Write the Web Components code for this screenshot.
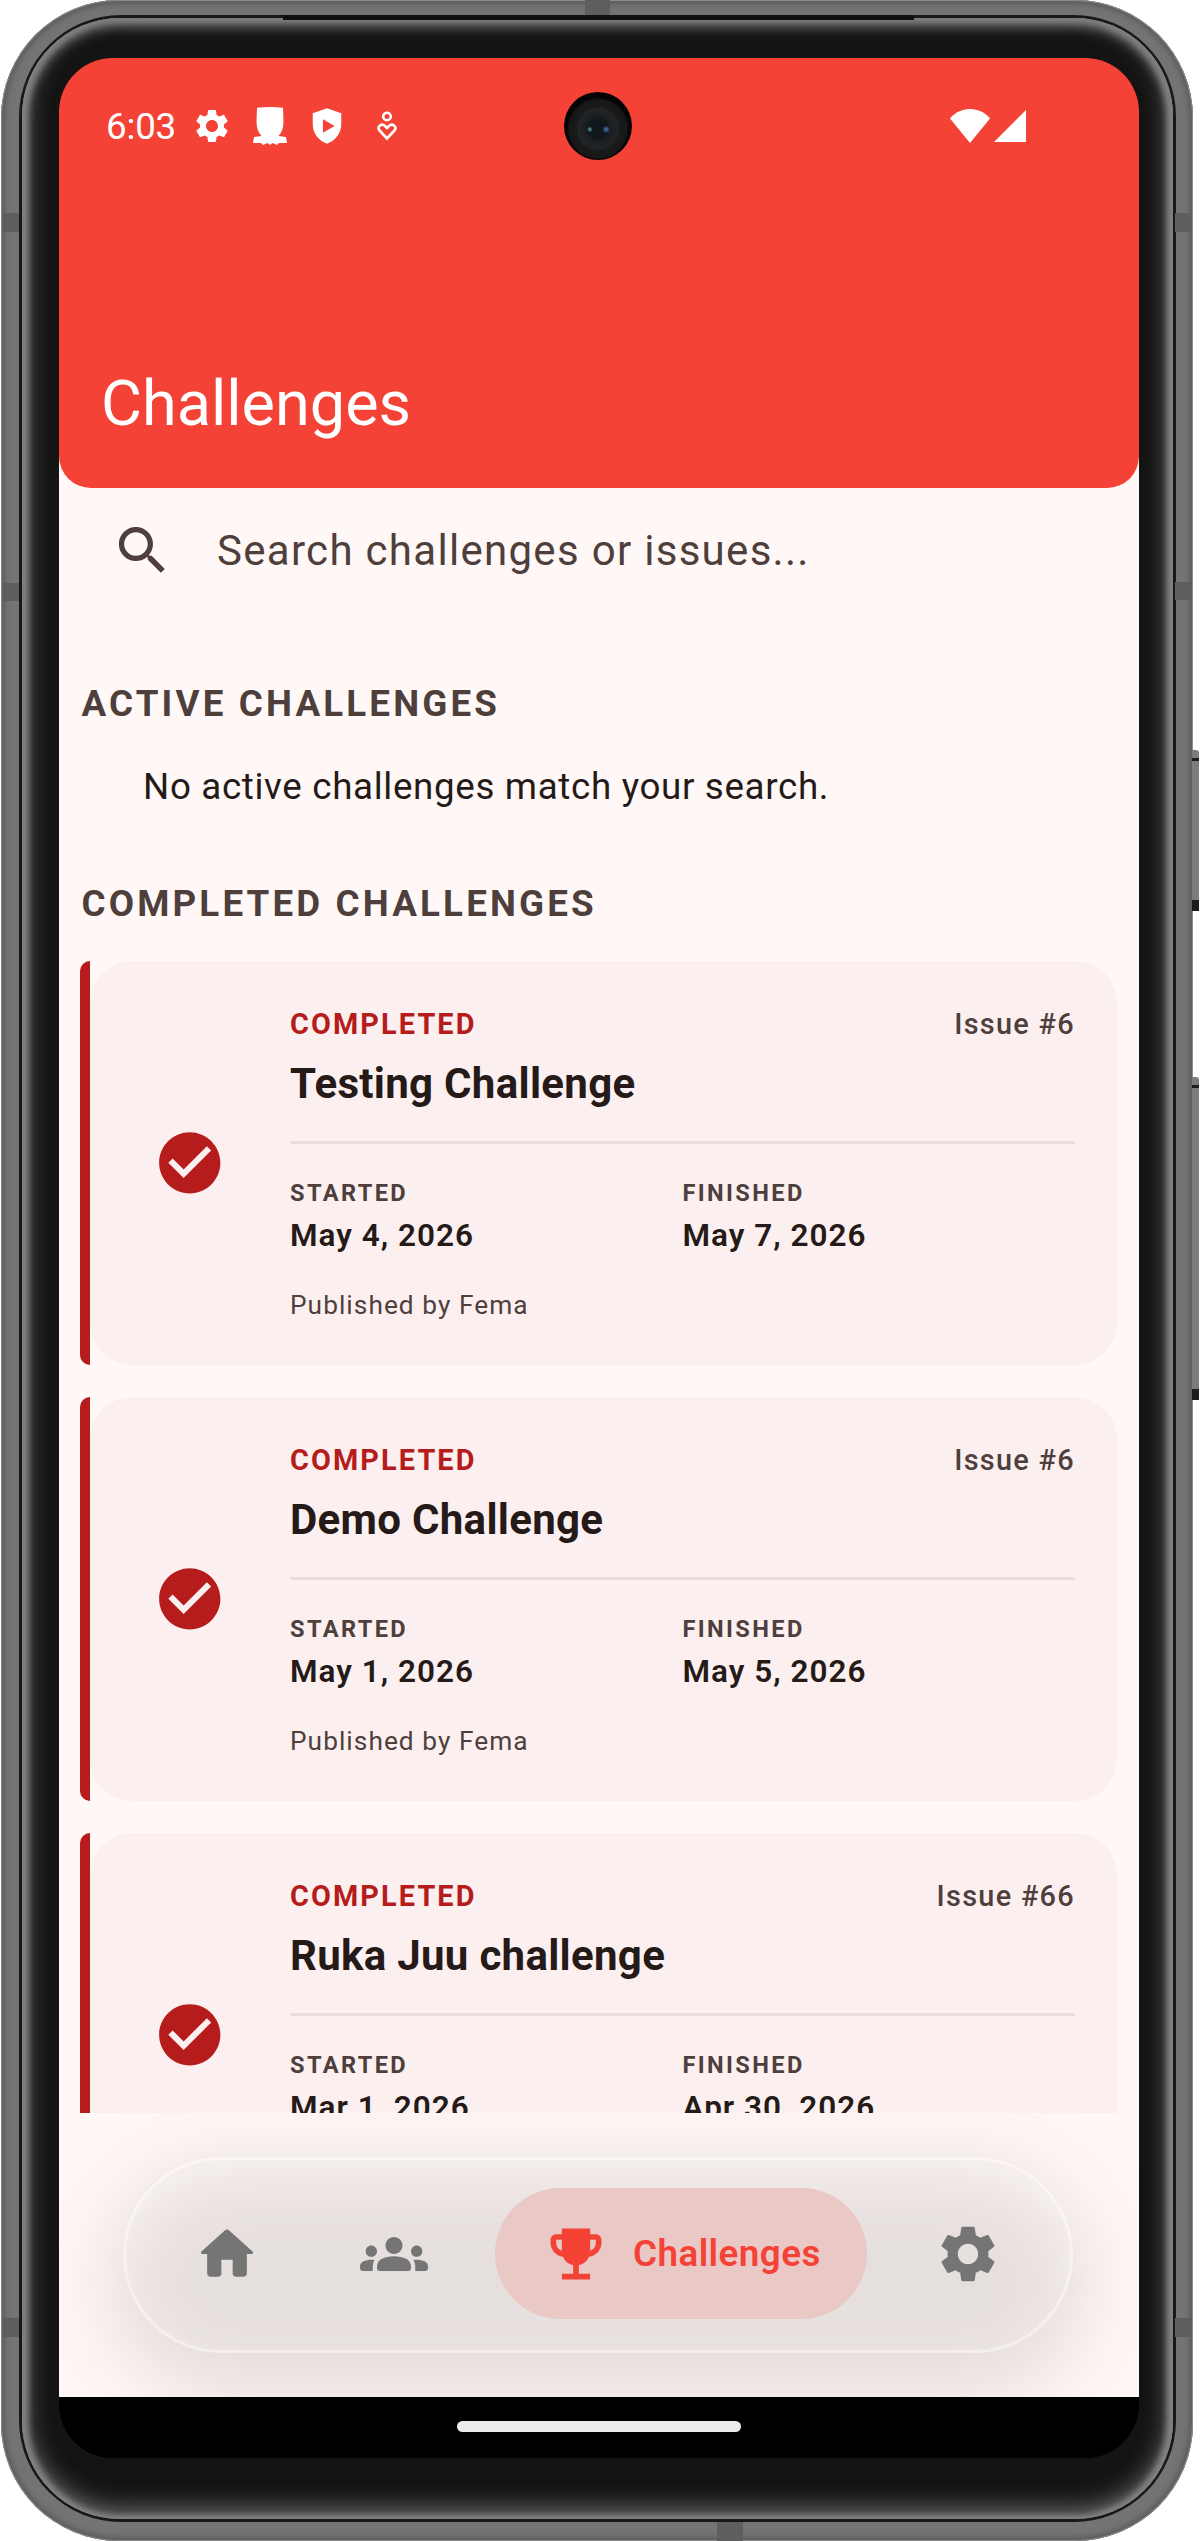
<!DOCTYPE html>
<html>
<head>
<meta charset="utf-8">
<title>Challenges</title>
<style>
  html, body { margin: 0; background: #fff; }
  body { font-family: Roboto, "Noto Sans", sans-serif; }
</style>
</head>
<body>
<device-frame>
  <status-bar slot="overlay"></status-bar>
  <app-header>Challenges</app-header>
  <challenge-list>
    <search-field placeholder="Search challenges or issues..."></search-field>
    <section-title style="margin-top:100px">ACTIVE CHALLENGES</section-title>
    <empty-note>No active challenges match your search.</empty-note>
    <section-title style="margin:71px 0 35px">COMPLETED CHALLENGES</section-title>
    <challenge-card name="Testing Challenge" issue="Issue #6" started="May 4, 2026" finished="May 7, 2026" publisher="Fema"></challenge-card>
    <challenge-card name="Demo Challenge" issue="Issue #6" started="May 1, 2026" finished="May 5, 2026" publisher="Fema"></challenge-card>
    <challenge-card name="Ruka Juu challenge" issue="Issue #66" started="Mar 1, 2026" finished="Apr 30, 2026" publisher="Fema"></challenge-card>
  </challenge-list>
  <bottom-nav></bottom-nav>
  <gesture-bar></gesture-bar>
</device-frame>

<script>
const ICONS = {
  home: "M10 19v-5h4v5c0 .55.45 1 1 1h3c.55 0 1-.45 1-1v-7h1.7c.46 0 .68-.57.33-.87L12.67 3.6c-.38-.34-.96-.34-1.34 0l-8.36 7.53c-.34.3-.13.87.33.87H5v7c0 .55.45 1 1 1h3c.55 0 1-.45 1-1z",
  groups: "M12 12.75c1.63 0 3.07.39 4.24.9 1.08.48 1.76 1.56 1.76 2.73V17c0 .55-.45 1-1 1H7c-.55 0-1-.45-1-1v-.61c0-1.18.68-2.26 1.76-2.73 1.17-.52 2.61-.91 4.24-.91zM4 13c1.1 0 2-.9 2-2s-.9-2-2-2-2 .9-2 2 .9 2 2 2zm1.13 1.1c-.37-.06-.74-.1-1.13-.1-.99 0-1.93.21-2.78.58C.48 14.9 0 15.62 0 16.43V17c0 .55.45 1 1 1h3.5v-1.61c0-.83.23-1.61.63-2.29zM20 13c1.1 0 2-.9 2-2s-.9-2-2-2-2 .9-2 2 .9 2 2 2zm4 3.43c0-.81-.48-1.53-1.22-1.85-.85-.37-1.79-.58-2.78-.58-.39 0-.76.04-1.13.1.4.68.63 1.46.63 2.29V18H23c.55 0 1-.45 1-1v-.57zM12 6c1.66 0 3 1.34 3 3s-1.34 3-3 3-3-1.34-3-3 1.34-3 3-3z",
  trophy: "M19 5h-2V3H7v2H5c-1.1 0-2 .9-2 2v1c0 2.55 1.92 4.63 4.39 4.94.63 1.5 1.98 2.63 3.61 2.96V19H7v2h10v-2h-4v-3.1c1.63-.33 2.98-1.46 3.61-2.96C19.08 12.63 21 10.55 21 8V7c0-1.1-.9-2-2-2zM5 8V7h2v3.82C5.84 10.4 5 9.3 5 8zm14 0c0 1.3-.84 2.4-2 2.82V7h2v1z",
  gear: "M19.14 12.94c.04-.3.06-.61.06-.94 0-.32-.02-.64-.07-.94l2.03-1.58c.18-.14.23-.41.12-.61l-1.92-3.32c-.12-.22-.37-.29-.59-.22l-2.39.96c-.5-.38-1.03-.7-1.62-.94l-.36-2.54c-.04-.24-.24-.41-.48-.41h-3.84c-.24 0-.43.17-.47.41l-.36 2.54c-.59.24-1.13.57-1.62.94l-2.39-.96c-.22-.08-.47 0-.59.22L2.74 8.87c-.12.21-.08.47.12.61l2.03 1.58c-.05.3-.09.63-.09.94s.02.64.07.94l-2.03 1.58c-.18.14-.23.41-.12.61l1.92 3.32c.12.22.37.29.59.22l2.39-.96c.5.38 1.03.7 1.62.94l.36 2.54c.05.24.24.41.48.41h3.84c.24 0 .44-.17.47-.41l.36-2.54c.59-.24 1.13-.56 1.62-.94l2.39.96c.22.08.47 0 .59-.22l1.92-3.32c.12-.22.07-.47-.12-.61l-2.01-1.58zM12 15.6c-1.98 0-3.6-1.62-3.6-3.6s1.62-3.6 3.6-3.6 3.6 1.62 3.6 3.6-1.62 3.6-3.6 3.6z",
  search: "M15.5 14h-.79l-.28-.27C15.41 12.59 16 11.11 16 9.5 16 5.91 13.09 3 9.5 3S3 5.91 3 9.5 5.91 16 9.5 16c1.61 0 3.09-.59 4.23-1.57l.27.28v.79l5 4.99L20.49 19l-4.99-5zm-6 0C7.01 14 5 11.99 5 9.5S7.01 5 9.5 5 14 7.01 14 9.5 11.99 14 9.5 14z",
  check: "M12 2C6.48 2 2 6.48 2 12s4.48 10 10 10 10-4.48 10-10S17.52 2 12 2zm-2 15l-5-5 1.41-1.41L10 14.17l7.59-7.59L19 8l-9 9z"
};
const svgIcon = (name, size) => `<svg width="${size}" height="${size}" viewBox="0 0 24 24" fill="currentColor"><path fill-rule="evenodd" d="${ICONS[name]}"/></svg>`;

class DeviceFrame extends HTMLElement {
  constructor() {
    super();
    this.attachShadow({ mode: "open" }).innerHTML = `
      <style>
        :host { display: block; position: relative; width: 1200px; height: 2541px; overflow: hidden; }
        .metal {
          box-sizing: border-box; width: 1192px; height: 2541px; margin-left: 1px;
          padding: 15px 17px 19px 18px; border-radius: 118px;
          background: #747474;
          box-shadow: inset 0 0 0 1px #8c8c8c, inset 0 0 6px 3px #565656;
        }
        .line { box-sizing: border-box; height: 100%; padding: 3px; border-radius: 102px; background: #181818; }
        .inner {
          box-sizing: border-box; height: 100%; padding: 40px 33px 61px 37px; border-radius: 98px;
          background: #141414;
          box-shadow: inset 0 -6px 26px 2px #7d7d7d, inset 0 5px 12px 2px #7d7d7d, inset 4px 0 6px 1px #979797, inset -4px 0 6px 1px #979797;
        }
        .screen {
          position: relative; display: flex; flex-direction: column;
          width: 1080px; height: 2400px; overflow: hidden;
          border-radius: 54px; background: #000;
        }
        .camera {
          position: absolute; z-index: 3; left: 505px; top: 34px; width: 68px; height: 68px; border-radius: 50%;
          background:
            radial-gradient(circle 3px at 38% 55%, #5fa8a0, transparent),
            radial-gradient(circle 4px at 62% 55%, #4f78c0, transparent),
            radial-gradient(circle at 50% 54%, #10171d 0 10px, #1c1f22 13px, #222426 20px, #191a1b 22px, #171717 29px, #040404 31px);
        }
        .band { position: absolute; background: #5e5e5e; }
        .notch { position: absolute; left: 283px; top: 15px; width: 631px; height: 5px; background: #111; }
        .button { position: absolute; left: 1192px; width: 7px; background: #7c7c7c; border-radius: 0 3px 3px 0; }
        .button::before { content: ""; position: absolute; left: 0; right: 0; top: 8px; height: 3px; background: #1c1c1c; }
        .button::after { content: ""; position: absolute; left: 0; right: 0; bottom: 0; height: 11px; background: #1c1c1c; }
      </style>
      <div class="metal"><div class="line"><div class="inner">
        <div class="screen">
          <slot></slot>
          <slot name="overlay"></slot>
          <div class="camera"></div>
        </div>
      </div></div></div>
      <span class="notch"></span>
      <span class="band" style="left:2px;top:213px;width:17px;height:19px"></span>
      <span class="band" style="left:2px;top:583px;width:17px;height:18px"></span>
      <span class="band" style="left:2px;top:2318px;width:17px;height:19px"></span>
      <span class="band" style="left:1175px;top:213px;width:17px;height:19px"></span>
      <span class="band" style="left:1175px;top:582px;width:17px;height:18px"></span>
      <span class="band" style="left:1175px;top:2318px;width:17px;height:19px"></span>
      <span class="band" style="left:585px;top:0;width:25px;height:15px"></span>
      <span class="band" style="left:717px;top:2522px;width:26px;height:19px"></span>
      <span class="button" style="top:750px;height:161px"></span>
      <span class="button" style="top:1077px;height:323px"></span>`;
  }
}

class StatusBar extends HTMLElement {
  constructor() {
    super();
    this.attachShadow({ mode: "open" }).innerHTML = `
      <style>
        :host {
          position: absolute; z-index: 2; left: 0; top: 0; right: 0; height: 136px;
          display: flex; align-items: center; padding: 0 113px 0 47px; box-sizing: border-box;
          color: #fff; font: 400 36.75px Roboto, sans-serif;
        }
        span { width: 69px; letter-spacing: -.2px; }
        svg { display: block; flex: none; }
        .right { margin-left: auto; display: flex; gap: 4px; align-items: center; }
      </style>
      <span>6:03</span>
      <svg style="margin-left:17px" width="40" height="40" viewBox="0 0 24 24" fill="currentColor"><path fill-rule="evenodd" d="${ICONS.gear}"/></svg>
      <svg style="margin-left:21px" width="34" height="38" viewBox="0 0 34 38" fill="currentColor"><path d="M4 .8Q17-.6 30 .8L30.5 14Q30.5 24 25.5 29L33 30 34 36H26L24 38 19.5 36 17 38 14.5 36 10 38 8 36H0L1 30 8.500 29Q3.500 24 3.500 14Z"/></svg>
      <svg style="margin-left:22px" width="36" height="36" viewBox="0 0 24 24" fill="currentColor"><path fill-rule="evenodd" d="M12 .2 2.500 3.500V11c0 5.800 3.900 10.800 9.500 12.800 5.600-2 9.500-7 9.500-12.800V3.500zM9.300 7.500 17 12l-7.700 4.500z"/></svg>
      <svg style="margin-left:31px" width="22" height="30" viewBox="0 0 22 30" fill="none" stroke="currentColor" stroke-width="2.600"><circle cx="11" cy="5.500" r="3.800"/><path d="M11 27.500 3.500 19.500C.5 15.500 6 11.500 9 15L11 17 13 15C16 11.500 21.500 15.500 18.500 19.500Z"/></svg>
      <div class="right">
        <svg width="40" height="34" viewBox="0 0 40 34" fill="currentColor"><path d="M0 9.500C5 3.500 12 0 20 0s15 3.500 20 9.500L20 34Z"/></svg>
        <svg width="32" height="32" viewBox="0 0 32 32" fill="currentColor"><path d="M0 32 32 0V32Z"/></svg>
      </div>`;
  }
}

class AppHeader extends HTMLElement {
  constructor() {
    super();
    this.attachShadow({ mode: "open" }).innerHTML = `
      <style>
        :host {
          display: flex; flex: none; align-items: flex-end; box-sizing: border-box;
          height: 430px; padding: 0 0 48px 42px; background: #f44336;
          border-radius: 0 0 32px 32px; position: relative; z-index: 1;
          color: #fff; font: 400 63px/72px Roboto, sans-serif;
        }
      </style>
      <slot></slot>`;
  }
}

class ChallengeList extends HTMLElement {
  constructor() {
    super();
    this.attachShadow({ mode: "open" }).innerHTML = `
      <style>
        :host {
          display: block; flex: none; height: 1657px; margin-top: -32px; overflow: hidden; box-sizing: border-box;
          padding-top: 63px; background: #fff8f6;
        }
      </style>
      <slot></slot>`;
  }
}

class SearchField extends HTMLElement {
  constructor() {
    super();
    const text = this.getAttribute("placeholder");
    this.attachShadow({ mode: "open" }).innerHTML = `
      <style>
        :host {
          display: flex; align-items: center; gap: 43px; height: 63px; padding-left: 52px;
          color: #4e3f3c; font: 400 42px/61px Roboto, sans-serif; letter-spacing: 1.3px;
        }
        svg { display: block; flex: none; }
      </style>
      ${svgIcon("search", 63)}<span>${text}</span>`;
  }
}

class SectionTitle extends HTMLElement {
  constructor() {
    super();
    this.attachShadow({ mode: "open" }).innerHTML = `
      <style>
        :host {
          display: block; padding-left: 22.5px; color: #4e3f3c;
          font: 700 36.75px/44px Roboto, sans-serif; letter-spacing: 3.15px;
        }
      </style>
      <slot></slot>`;
  }
}

class EmptyNote extends HTMLElement {
  constructor() {
    super();
    this.attachShadow({ mode: "open" }).innerHTML = `
      <style>
        :host {
          display: block; margin-top: 37px; padding-left: 84px; color: #251a18;
          font: 400 36.75px/48px Roboto, sans-serif; letter-spacing: .66px;
        }
      </style>
      <slot></slot>`;
  }
}

class ChallengeCard extends HTMLElement {
  constructor() {
    super();
    const a = n => this.getAttribute(n);
    this.attachShadow({ mode: "open" }).innerHTML = `
      <style>
        :host { display: flex; height: 404px; margin: 0 22px 32px 21px; color: #251a18; }
        .bar { width: 10px; flex: none; background: #b71c1c; border-radius: 10px 0 0 10px; }
        .card { flex: 1; display: flex; background: #fbf0ef; border-radius: 42px; min-width: 0; }
        .mark { flex: none; width: 200px; display: flex; align-items: center; justify-content: center; color: #b71c1c; }
        .mark svg { display: block; }
        .body { flex: 1; min-width: 0; padding: 46px 42px 0 0; }
        .top { display: flex; justify-content: space-between; }
        .state { font: 700 28.875px/34px Roboto, sans-serif; letter-spacing: 2.1px; color: #b71c1c; }
        .issue { font: 500 28.875px/34px Roboto, sans-serif; letter-spacing: 1.3px; color: #4e3f3c; }
        h3 { margin: 13px 0 0; font: 700 42px/60px Roboto, sans-serif; letter-spacing: .3px; }
        hr { margin: 27px 0 0; border: 0; height: 3px; background: #eadcda; }
        .dates { display: grid; grid-template-columns: 1fr 1fr; margin-top: 33px; }
        .label { font: 700 23.625px/32px Roboto, sans-serif; letter-spacing: 2.36px; color: #4e3f3c; }
        .value { margin-top: 6px; font: 600 31.5px/42px Roboto, sans-serif; letter-spacing: 1px; }
        .by { margin-top: 30px; font: 400 26.25px/36px Roboto, sans-serif; letter-spacing: 1.05px; color: #4e3f3c; }
      </style>
      <div class="bar"></div>
      <div class="card">
        <div class="mark">${svgIcon("check", 73.5)}</div>
        <div class="body">
          <div class="top"><span class="state">COMPLETED</span><span class="issue">${a("issue")}</span></div>
          <h3>${a("name")}</h3>
          <hr>
          <div class="dates">
            <div><div class="label">STARTED</div><div class="value">${a("started")}</div></div>
            <div><div class="label">FINISHED</div><div class="value">${a("finished")}</div></div>
          </div>
          <div class="by">Published by ${a("publisher")}</div>
        </div>
      </div>`;
  }
}

class BottomNav extends HTMLElement {
  constructor() {
    super();
    this.attachShadow({ mode: "open" }).innerHTML = `
      <style>
        :host {
          display: block; flex: none; height: 284px; box-sizing: border-box; padding: 44px 66px 0 64px;
          background: #fff8f6; overflow: hidden; position: relative;
        }
        .nav {
          position: relative; box-sizing: border-box; height: 196px; display: flex; align-items: center;
          padding: 0 17px 3px; border-radius: 98px; border: 3px solid rgba(255,255,255,.42);
          background: rgba(255,255,255,.1); color: #757575;
        }
        .glow {
          position: absolute; left: 50px; right: 52px; top: 56px; height: 224px; border-radius: 112px;
          background: rgba(40,30,28,.13); filter: blur(44px);
        }
        .item { flex: none; width: 167px; display: flex; justify-content: center; }
        svg { display: block; flex: none; }
        .active {
          display: flex; align-items: center; gap: 23px; box-sizing: border-box;
          height: 131px; margin: 0 18px; padding: 0 46px 0 47px; border-radius: 66px;
          background: #e9c8c6; color: #f44336;
          font: 600 36.75px/44px Roboto, sans-serif; letter-spacing: .45px;
        }
      </style>
      <div class="glow"></div>
      <div class="nav">
        <div class="item">${svgIcon("home", 68)}</div>
        <div class="item">${svgIcon("groups", 68)}</div>
        <div class="active">${svgIcon("trophy", 68)}<span>Challenges</span></div>
        <div class="item">${svgIcon("gear", 68)}</div>
      </div>`;
  }
}

class GestureBar extends HTMLElement {
  constructor() {
    super();
    this.attachShadow({ mode: "open" }).innerHTML = `
      <style>
        :host { display: flex; flex: none; justify-content: center; height: 61px; padding-top: 24px; box-sizing: border-box; background: #000; }
        div { width: 284px; height: 11px; border-radius: 6px; background: #ececec; }
      </style>
      <div></div>`;
  }
}

customElements.define("device-frame", DeviceFrame);
customElements.define("status-bar", StatusBar);
customElements.define("app-header", AppHeader);
customElements.define("challenge-list", ChallengeList);
customElements.define("search-field", SearchField);
customElements.define("section-title", SectionTitle);
customElements.define("empty-note", EmptyNote);
customElements.define("challenge-card", ChallengeCard);
customElements.define("bottom-nav", BottomNav);
customElements.define("gesture-bar", GestureBar);
</script>
</body>
</html>
